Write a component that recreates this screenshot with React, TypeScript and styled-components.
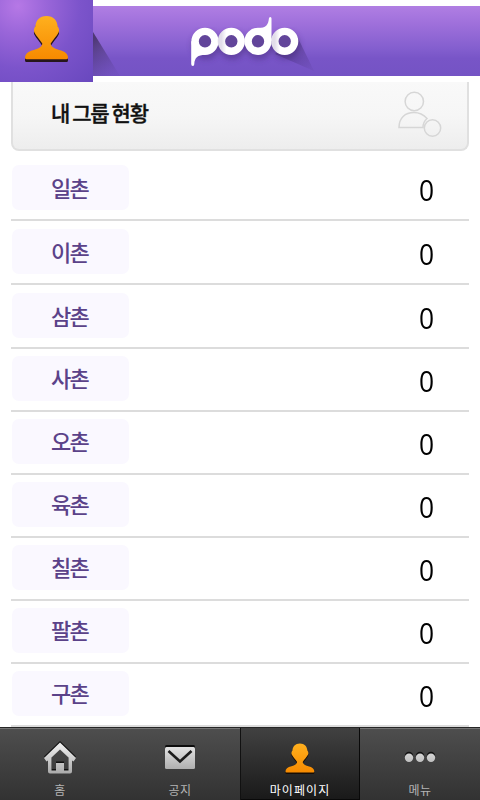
import React from 'react';
import styled, { createGlobalStyle } from 'styled-components';

const Global = createGlobalStyle`
  * { box-sizing: border-box; }
  body { margin: 0; background: #fff; overflow: hidden; font-family: "Noto Sans CJK KR", sans-serif; }
`;

const Screen = styled.div`
  width: 480px;
  height: 800px;
  display: flex;
  flex-direction: column;
  overflow: hidden;
  background: #fff;
`;

const Header = styled.header`
  display: flex;
  align-items: flex-start;
  height: 82px;
  flex: none;
`;

const ProfileButton = styled.button`
  width: 93px;
  height: 82px;
  padding: 0;
  border: 0;
  flex: none;
  background: radial-gradient(circle at 18px 6px, #b678e6 0, #9a66d9 28px, #7c54cb 62px, #6747bd 110px);
  svg { display: block; }
`;

const TitleBar = styled.div`
  width: 387px;
  height: 70px;
  margin-top: 6px;
  background: linear-gradient(#b07ee3 0, #9f70db 25%, #845fcf 60%, #7855c7 75%, #7453c4 100%);
  svg { display: block; }
`;

const GroupHeader = styled.section`
  display: flex;
  justify-content: space-between;
  width: 458px;
  height: 69px;
  flex: none;
  margin: 0 0 6px 11px;
  padding: 0 24px 0 38px;
  border: 2px solid #e0e0e0;
  border-top: 0;
  border-radius: 0 0 8px 8px;
  background: linear-gradient(#f9f9f9, #f6f6f6 50%, #ededed);
`;

const GroupTitle = styled.h1`
  margin: 0;
  font-size: 21px;
  line-height: 61px;
  font-weight: 500;
  letter-spacing: -1.25px;
  word-spacing: -0.3px;
  color: #111;
  -webkit-text-stroke: 0.35px #111;
  white-space: nowrap;
`;

const List = styled.ul`
  list-style: none;
  margin: 0 11px;
  padding: 0;
`;

const Row = styled.li<{ $tall: boolean }>`
  display: flex;
  justify-content: space-between;
  align-items: flex-end;
  height: ${(p) => (p.$tall ? 64 : 63)}px;
  padding: 0 35px 9px 1px;
  border-bottom: 2px solid #dcdcdc;
`;

const Degree = styled.span<{ $tall: boolean }>`
  width: 117px;
  height: 45px;
  border-radius: 7px;
  padding-left: 39px;
  background: #faf8ff;
  color: #5b4289;
  font-size: 22px;
  font-weight: 500;
  line-height: ${(p) => (p.$tall ? 45 : 43)}px;
  letter-spacing: -1.8px;
`;

const Count = styled.span`
  font-family: "Open Sans", sans-serif;
  font-size: 30px;
  line-height: 40px;
  color: #000;
  transform: scaleX(0.88);
  transform-origin: right center;
`;

const Nav = styled.nav`
  display: grid;
  grid-template-columns: repeat(4, 120px);
  height: 73px;
  flex: none;
  margin-top: auto;
`;

const Tab = styled.a<{ $active?: boolean }>`
  display: flex;
  flex-direction: column;
  align-items: center;
  height: 73px;
  padding-top: 11px;
  border-top: 1px solid #262626;
  box-shadow: ${(p) => (p.$active ? 'inset 1px 0 #111, inset -1px -1px #090909' : 'inset 0 1px #747474')};
  background: ${(p) => (p.$active ? 'linear-gradient(#414141, #191919)' : 'linear-gradient(#4e4e4e, #323232)')};
  color: ${(p) => (p.$active ? '#fff' : '#b4b4b4')};
  font-size: 12px;
  line-height: 18px;
  letter-spacing: ${(p) => (p.$active ? '1.1px' : '0.4px')};
  svg { display: block; margin-bottom: 2px; }
`;

const bust =
  'M21.500 0C14.500 0 10.800 4.500 10.400 10.500C9.300 12 8.300 14.500 9.300 16.500C11 20 15 24 17.300 28C17.300 31 14 33 9 34.500C3 36 0 38.500 0 42.500Q0 44 1.500 44H41.500Q43 44 43 42.500C43 38.500 40 36 34 34.500C29 33 25.700 31 25.700 28C28 24 32 20 33.700 16.500C34.700 14.500 33.700 12 32.600 10.500C32.200 4.500 28.500 0 21.500 0Z';

const Amber = ({ id }: { id: string }) => (
  <linearGradient id={id} x1="0" y1="0" x2="0" y2="1">
    <stop offset="0" stopColor="#ffb01e" />
    <stop offset="1" stopColor="#f68a00" />
  </linearGradient>
);

const Silver = ({ id }: { id: string }) => (
  <linearGradient id={id} gradientUnits="userSpaceOnUse" x1="0" y1="4" x2="0" y2="34">
    <stop offset="0" stopColor="#ececec" />
    <stop offset="1" stopColor="#a6a6a6" />
  </linearGradient>
);

const ProfileIcon = () => (
  <svg width="93" height="82" viewBox="0 0 93 82">
    <defs>
      <Amber id="amberBig" />
      <filter id="soft"><feGaussianBlur stdDeviation="0.7" /></filter>
    </defs>
    <path d={bust} transform="translate(25 18)" fill="#28131c" filter="url(#soft)" />
    <path d={bust} transform="translate(25 16) scale(1 .985)" fill="url(#amberBig)" />
  </svg>
);

const Logo = () => (
  <svg width="387" height="70" viewBox="93 6 387 70">
    <defs>
      <linearGradient id="fold" gradientUnits="userSpaceOnUse" x1="90" y1="42" x2="112" y2="76">
        <stop offset="0" stopColor="#47336b" stopOpacity=".9" />
        <stop offset="1" stopColor="#5c4398" stopOpacity=".1" />
      </linearGradient>
      <linearGradient id="cast" gradientUnits="userSpaceOnUse" x1="285" y1="40" x2="308" y2="70">
        <stop offset="0" stopColor="#49317c" stopOpacity=".7" />
        <stop offset="1" stopColor="#49317c" stopOpacity=".1" />
      </linearGradient>
      <linearGradient id="overlap">
        <stop offset="0" stopColor="#e2ddea" />
        <stop offset=".25" stopColor="#fff" />
      </linearGradient>
      <filter id="haze" x="-20%" y="-40%" width="140%" height="200%"><feGaussianBlur stdDeviation="3" /></filter>
    </defs>
    <path d="M93 32L120 76H93Z" fill="url(#fold)" />
    <path d="M297 36L314 71L275 54Z" fill="url(#cast)" />
    <g fill="none" stroke="#442b78" strokeWidth="7" opacity=".6" filter="url(#haze)" transform="translate(1 4)">
      <circle cx="205" cy="41.300" r="10" />
      <circle cx="231.300" cy="41.300" r="10" />
      <circle cx="258" cy="41.300" r="10" />
      <circle cx="284.700" cy="41.300" r="10" />
    </g>
    <g fill="#62459a" stroke="#fff" strokeWidth="7.400">
      <circle cx="205" cy="41.300" r="9.900" />
      <circle cx="258" cy="41.300" r="9.900" />
      <circle cx="231.300" cy="41.300" r="9.900" stroke="url(#overlap)" />
      <circle cx="284.700" cy="41.300" r="9.900" stroke="url(#overlap)" />
    </g>
    <path d="M191.200 41V64Q191.200 66 192.800 66Q194.300 66 194.300 64C194.500 57.500 198 55 205 54.700L204 51L195.500 44Z" fill="#fff" />
    <path d="M271.500 41V18.500Q271.500 17 270.300 17Q269 17 268.900 18.500C268.300 25 266 28 258 28L260 32L267.500 39Z" fill="#fff" />
  </svg>
);

const GroupIcon = () => (
  <svg width="46" height="60" viewBox="0 0 46 60" fill="none" stroke="#d6d6d6" strokeWidth="1.500">
    <circle cx="17.300" cy="19.500" r="9.200" />
    <path d="M26 45.500H2C2 36 8 30.500 17 30.500C22 30.500 26 32 30 36.500C27 39 26 41 26 45.500Z" />
    <circle cx="35.500" cy="46" r="8.200" />
  </svg>
);

const HomeIcon = () => {
  const roof = 'M16 1L32 16.500L29.500 20L28 19V30Q28 32 26 32H6Q4 32 4 30V19L2.500 20L0 16.500ZM16 8L7.500 16V29H12V21.500H20V29H24.500V16Z';
  return (
    <svg width="36" height="40" viewBox="-2 -1 36 40">
      <defs><Silver id="silverHome" /></defs>
      <path d={roof} fill="#111" fillRule="evenodd" />
      <path d={roof} transform="translate(0 1.500)" fill="url(#silverHome)" fillRule="evenodd" />
    </svg>
  );
};

const MailIcon = () => (
  <svg width="36" height="40" viewBox="0 0 36 40">
    <defs><Silver id="silverMail" /></defs>
    <rect x="3" y="6" width="30" height="22" rx="1.500" fill="#0d0d0d" />
    <rect x="3" y="8" width="30" height="22" rx="1.500" fill="url(#silverMail)" />
    <path d="M6.500 12L18 22.500L29.500 12" fill="none" stroke="#1c1c1c" strokeWidth="2.600" />
  </svg>
);

const PersonIcon = () => (
  <svg width="36" height="40" viewBox="0 0 36 40">
    <defs><Amber id="amberSmall" /></defs>
    <path d={bust} transform="translate(3.500 6) scale(.67 .66)" fill="#170d05" />
    <path d={bust} transform="translate(3.500 4.500) scale(.67 .66)" fill="url(#amberSmall)" />
  </svg>
);

const MoreIcon = () => (
  <svg width="36" height="40" viewBox="0 0 36 40">
    <defs><Silver id="silverMore" /></defs>
    {[7, 18, 29].map((x) => (
      <g key={x}>
        <circle cx={x} cy="17" r="4.200" fill="#111" />
        <circle cx={x} cy="18.800" r="4.200" fill="url(#silverMore)" />
      </g>
    ))}
  </svg>
);

const degrees = ['일촌', '이촌', '삼촌', '사촌', '오촌', '육촌', '칠촌', '팔촌', '구촌'];

export default function App() {
  return (
    <Screen>
      <Global />
      <Header>
        <ProfileButton aria-label="profile"><ProfileIcon /></ProfileButton>
        <TitleBar><Logo /></TitleBar>
      </Header>
      <GroupHeader>
        <GroupTitle>내 그룹 현황</GroupTitle>
        <GroupIcon />
      </GroupHeader>
      <List>
        {degrees.map((d, i) => (
          <Row key={d} $tall={i < 3}>
            <Degree $tall={i < 3}>{d}</Degree>
            <Count>0</Count>
          </Row>
        ))}
      </List>
      <Nav>
        <Tab><HomeIcon />홈</Tab>
        <Tab><MailIcon />공지</Tab>
        <Tab $active><PersonIcon />마이페이지</Tab>
        <Tab><MoreIcon />메뉴</Tab>
      </Nav>
    </Screen>
  );
}
